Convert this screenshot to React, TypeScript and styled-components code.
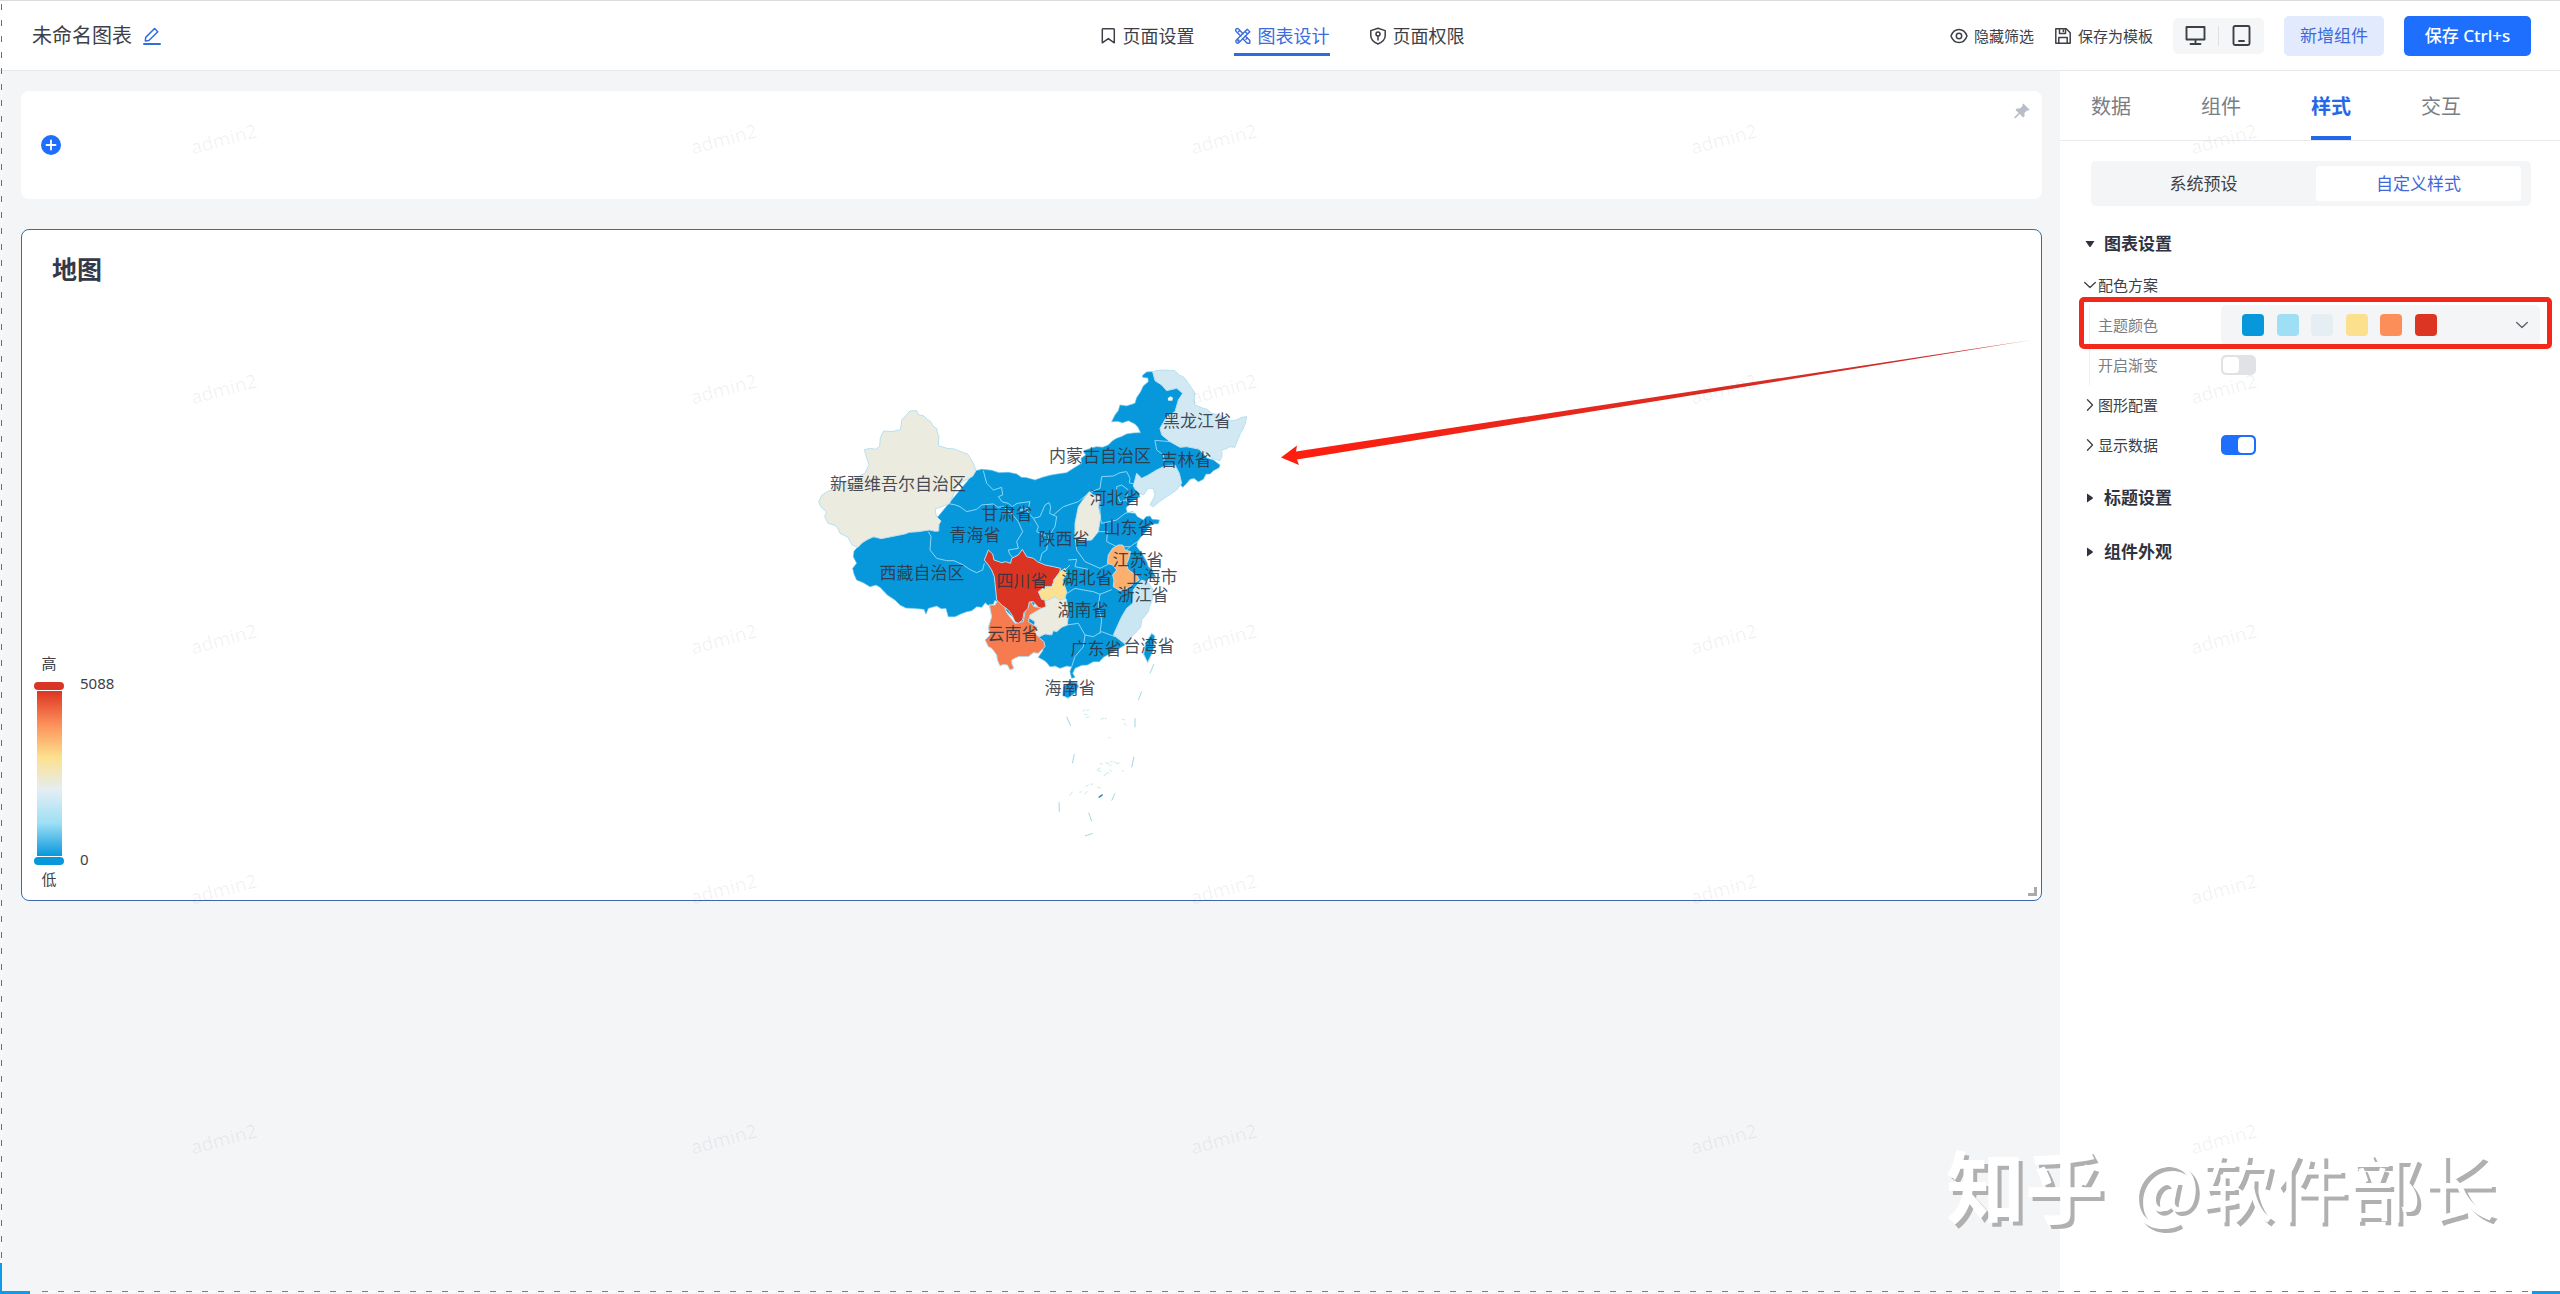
import React, { useId, useState } from "react";
import styled, { createGlobalStyle, css } from "styled-components";

const fontStack = `"Noto Sans", "Noto Sans CJK SC", sans-serif`;
const ink = "#3d4047";
const blue = "#1f6fff";

const GlobalStyle = createGlobalStyle`
  *, *::before, *::after { box-sizing: border-box; }
  body { margin: 0; background: #f3f5f7; color: ${ink}; font-family: ${fontStack}; }
  button { font-family: inherit; cursor: pointer; }
  h1, h2, h3, p { margin: 0; }
`;

const plainButton = css`
  display: inline-flex;
  align-items: center;
  padding: 0;
  border: 0;
  background: none;
  color: inherit;
`;

const Page = styled.div`
  display: flex;
  flex-direction: column;
  min-height: 100vh;
  position: relative;
  overflow: hidden;
`;

/* ---------- top bar ---------- */

const TopBar = styled.header`
  display: grid;
  grid-template-columns: 1fr auto 1fr;
  align-items: center;
  height: 71px;
  padding: 0 29px 0 32px;
  background: #fff;
  border-top: 1px solid #dcdcdc;
  border-bottom: 1px solid #e6e8eb;
`;

const TitleGroup = styled.div`
  display: flex;
  align-items: center;
  gap: 11px;
`;

const PageTitle = styled.h1`
  font-size: 20px;
  font-weight: 400;
  line-height: 30px;
`;

const IconButton = styled.button<{ $color?: string }>`
  ${plainButton}
  color: ${(p) => p.$color ?? "inherit"};
`;

const Nav = styled.nav`
  display: flex;
  gap: 39px;
`;

const NavLink = styled.a<{ $active?: boolean }>`
  display: flex;
  align-items: center;
  gap: 6px;
  height: 41px;
  padding-top: 3px;
  border-bottom: 3px solid ${(p) => (p.$active ? "#2b6be4" : "transparent")};
  color: ${(p) => (p.$active ? "#3b6ce0" : ink)};
  font-size: 18px;
  line-height: 24px;
  text-decoration: none;
`;

const Actions = styled.div`
  display: flex;
  align-items: center;
  justify-content: flex-end;
  gap: 20px;
`;

const TextAction = styled.button`
  ${plainButton}
  gap: 6px;
  font-size: 15px;
  line-height: 20px;
`;

const DeviceGroup = styled.div`
  display: flex;
  align-items: center;
  justify-content: space-between;
  width: 91px;
  height: 36px;
  padding: 0 12px;
  border-radius: 5px;
  background: #f5f6f7;
`;

const Separator = styled.span`
  width: 1px;
  height: 20px;
  background: #dcdfe3;
`;

const Button = styled.button<{ $primary?: boolean }>`
  height: 40px;
  padding: 0;
  width: ${(p) => (p.$primary ? 127 : 100)}px;
  border: 0;
  border-radius: 5px;
  background: ${(p) => (p.$primary ? blue : "#e2ebfd")};
  color: ${(p) => (p.$primary ? "#fff" : "#3f68d8")};
  font-size: 17px;
  font-weight: ${(p) => (p.$primary ? 500 : 400)};
  line-height: 24px;
`;

/* ---------- canvas ---------- */

const Body = styled.div`
  display: flex;
  flex: 1;
`;

const Canvas = styled.main`
  display: flex;
  flex: 1;
  flex-direction: column;
  gap: 30px;
  min-width: 0;
  padding: 20px 18px 0 21px;
`;

const FilterCard = styled.section`
  display: flex;
  align-items: center;
  justify-content: space-between;
  height: 108px;
  padding: 12px 12px 12px 20px;
  border-radius: 8px;
  background: #fff;
`;

const PinButton = styled(IconButton)`
  align-self: flex-start;
`;

const ChartCard = styled.section`
  position: relative;
  padding: 23px 0 11px;
  border: 1px solid #3f68ac;
  border-radius: 8px;
  background: #fff;
`;

const ChartTitle = styled.h2`
  padding-left: 30px;
  color: #353947;
  font-size: 25px;
  font-weight: 700;
  line-height: 32px;
`;

const ChartBody = styled.div`
  display: grid;
  grid-template-columns: 1fr auto 1fr;
  align-items: end;
`;

const MapSvg = styled.svg`
  display: block;
  margin: 65px 0 39px;
  font-family: ${fontStack};
`;

const ArrowSvg = styled.svg`
  align-self: start;
  display: block;
  width: 100%;
  margin-top: 51px;
`;

const Legend = styled.div`
  display: grid;
  grid-template-columns: 30px auto;
  grid-template-rows: 20px 196px 20px;
  column-gap: 16px;
  justify-content: start;
  padding-left: 12px;
  font-size: 15px;
  line-height: 20px;
`;

const LegendEnd = styled.span`
  grid-column: 1;
  text-align: center;
`;

const LegendScale = styled.div`
  display: flex;
  flex-direction: column;
  align-items: center;
  gap: 1px;
  padding: 9px 0 4px;
`;

const LegendHandle = styled.span<{ $color: string }>`
  width: 30px;
  height: 8px;
  border-radius: 4px;
  background: ${(p) => p.$color};
`;

const LegendBar = styled.span`
  flex: 1;
  width: 25px;
  background: linear-gradient(to top, #0798dc, #9edff5, #e4eef3, #fde08e, #fc8f59, #dd3524);
`;

const LegendValues = styled.div`
  display: flex;
  flex-direction: column;
  justify-content: space-between;
`;

const ResizeCorner = styled.span`
  position: absolute;
  right: 4px;
  bottom: 4px;
  width: 9px;
  height: 9px;
  border: solid #aaa;
  border-width: 0 3px 3px 0;
`;

/* ---------- settings panel ---------- */

const Panel = styled.aside`
  width: 500px;
  background: #fff;
`;

const Tabs = styled.div`
  display: flex;
  gap: 70px;
  height: 70px;
  padding: 0 31px;
  border-bottom: 1px solid #e8eaed;
`;

const Tab = styled.button<{ $active?: boolean }>`
  height: 69px;
  padding: 6px 0 0;
  border: 0;
  border-bottom: 4px solid ${(p) => (p.$active ? "#2468e8" : "transparent")};
  background: none;
  color: ${(p) => (p.$active ? "#2468e8" : "#797d84")};
  font-size: 20px;
  font-weight: ${(p) => (p.$active ? 700 : 400)};
  line-height: 30px;
`;

const Segmented = styled.div`
  display: grid;
  grid-template-columns: 225fr 205fr;
  margin: 20px 29px 17px 31px;
  padding: 5px 10px 5px 0;
  border-radius: 5px;
  background: #f3f5f7;
`;

const Segment = styled.button<{ $active?: boolean }>`
  height: 35px;
  padding: 1px 0 0;
  border: 0;
  border-radius: 4px;
  background: ${(p) => (p.$active ? "#fff" : "transparent")};
  color: ${(p) => (p.$active ? "#3f68d8" : ink)};
  font-size: 17px;
  line-height: 24px;
`;

const Sections = styled.div`
  display: flex;
  flex-direction: column;
  gap: 12px;
  padding: 0 20px 0 24px;
`;

const SectionHeader = styled.button`
  ${plainButton}
  gap: 8px;
  height: 42px;
  color: #2f3340;
  font-size: 17px;
  font-weight: 700;
  line-height: 24px;
`;

const Row = styled.div`
  display: grid;
  grid-template-columns: 137px 1fr;
  align-items: center;
  height: 40px;
  position: relative;
  font-size: 15px;
  line-height: 20px;
`;

const GroupToggle = styled.button`
  ${plainButton}
  gap: 2px;
  font-size: 15px;
  line-height: 20px;
`;

const Nested = styled.div`
  margin-left: 5px;
  border-left: 1px solid #eceef1;

  & > ${Row} {
    grid-template-columns: 131px 1fr;
  }
`;

const NestedLabel = styled.label`
  padding-left: 8px;
  color: #797d84;
`;

const PaletteButton = styled.button`
  ${plainButton}
  justify-content: space-between;
  height: 40px;
  padding: 0 12px 0 21px;
  border-radius: 5px;
  background: #f3f5f7;
  color: #5a5e66;
`;

const Swatches = styled.span`
  display: flex;
  justify-content: space-between;
  width: 195px;
`;

const Swatch = styled.span<{ $color: string }>`
  width: 22px;
  height: 22px;
  border-radius: 4px;
  background: ${(p) => p.$color};
`;

const Highlight = styled.span`
  position: absolute;
  inset: -8px -12px -4px -11px;
  border: 5px solid #f3281a;
  border-radius: 5px;
  pointer-events: none;
`;

const Switch = styled.input`
  appearance: none;
  display: flex;
  width: 35px;
  height: 20px;
  margin: 0;
  padding: 2px;
  border-radius: 5px;
  background: #e0e2e5;

  &::before {
    content: "";
    width: 16px;
    border-radius: 4px;
    background: #fff;
  }

  &:checked {
    justify-content: flex-end;
    background: ${blue};
  }
`;

/* ---------- overlays ---------- */

const WatermarkLayer = styled.div`
  position: absolute;
  inset: 14px 0 0 -26px;
  display: grid;
  grid-template-columns: repeat(auto-fill, 500px);
  grid-auto-rows: 250px;
  overflow: hidden;
  pointer-events: none;
`;

const WatermarkCell = styled.div`
  display: grid;
  place-items: center;
  width: 500px;
`;

const WatermarkText = styled.span`
  transform: rotate(-15deg);
  color: rgba(0, 0, 0, 0.06);
  font-size: 19px;
  line-height: 24px;
`;

const Signature = styled.p`
  position: absolute;
  right: 64px;
  bottom: 60px;
  display: flex;
  align-items: center;
  gap: 26px;
  color: #fff;
  font-family: "Noto Sans CJK SC", sans-serif;
  font-size: 74px;
  line-height: 100px;
  text-shadow: 4px 4px 0 #b0b0b0;
  pointer-events: none;

  strong {
    font-size: 79px;
    font-weight: 700;
  }
`;

const LeftGuide = styled.span`
  position: absolute;
  top: 4px;
  bottom: 31px;
  left: 1px;
  width: 1px;
  background: repeating-linear-gradient(to bottom, #2687ad 0 6px, #fff 6px 16px);
`;

const BottomGuide = styled.span`
  position: absolute;
  right: 28px;
  bottom: 2px;
  left: 42px;
  height: 1px;
  background: repeating-linear-gradient(to right, #4a90b0 0 6px, #fff 6px 16px);
`;

const Corner = styled.span<{ $side: "left" | "right" }>`
  position: absolute;
  bottom: 0;
  ${(p) => p.$side}: 0;
  width: ${(p) => (p.$side === "left" ? 30 : 28)}px;
  height: 31px;
  border-bottom: 3px solid #109bea;
  border-left: ${(p) => (p.$side === "left" ? "2px solid #109bea" : "0")};
  pointer-events: none;
`;

/* ---------- icons ---------- */

const Icon = ({ size = 18, box = 18, width = 1.5, children }: {
  size?: number; box?: number; width?: number; children: React.ReactNode;
}) => (
  <svg width={size} height={size} viewBox={`0 0 ${box} ${box}`} fill="none" stroke="currentColor"
    strokeWidth={width} strokeLinecap="round" strokeLinejoin="round" aria-hidden="true">
    {children}
  </svg>
);

const EditIcon = () => (
  <Icon><path d="M2.3 14l.4-3.600L11.600 1.500l3.200 3.200L5.900 13.500z" /><path d="M1 17h16" strokeWidth="2" /></Icon>
);
const BookmarkIcon = () => (
  <Icon><path d="M4 1.800h10.500a.8.8 0 0 1 .8.8v13.200l-6-4.200-6 4.200V2.600a.8.8 0 0 1 .7-.8z" /></Icon>
);
const DesignIcon = () => (
  <Icon width={1.4}>
    <path d="M6.800 9L2.200 4.400a1.600 1.600 0 0 1 2.300-2.300L9 6.800M11.200 9l4.600 4.600v2.600h-2.600L8.600 11.500" />
    <path d="M13.200 2.200l2.600 2.600L5 15.600a1.800 1.800 0 0 1-2.600-2.600zM4.500 4.800l1-1M12 12.300l1.200-1.200M11 4.400l2.600 2.600" />
    <circle cx="4.400" cy="13.600" r=".6" />
  </Icon>
);
const ShieldIcon = () => (
  <Icon><path d="M9 1.200l7.200 2.400v5.200c0 3.800-3 6.400-7.200 8.200-4.200-1.800-7.200-4.400-7.200-8.200V3.600z" /><circle cx="9" cy="6.900" r="2" /><path d="M9 9v4" /></Icon>
);
const EyeIcon = () => (
  <Icon><path d="M1 9c1.500-4.200 4.500-6.500 8-6.500s6.500 2.300 8 6.500c-1.500 4.200-4.500 6.500-8 6.500S2.500 13.200 1 9z" /><circle cx="9" cy="9" r="2.700" /></Icon>
);
const SaveIcon = () => (
  <Icon><path d="M1.800 1.800h10.400l4 4v10.400H1.800z" /><path d="M5.500 2v4.500h6V2M9.300 3v1.500M4.800 16v-5.500h8.400V16" /></Icon>
);
const MonitorIcon = () => (
  <Icon size={21} box={21} width={1.9}><path d="M1.500 2h18v12.500h-18zM10.500 14.500v4M5.500 19h10" /></Icon>
);
const TabletIcon = () => (
  <Icon size={21} box={21} width={1.9}><rect x="2.500" y="1" width="16" height="19" rx="1.500" /><path d="M8 16h5" /></Icon>
);
const PlusIcon = () => (
  <svg width="20" height="20" viewBox="0 0 20 20" aria-hidden="true">
    <circle cx="10" cy="10" r="10" fill={blue} />
    <path d="M10 5.500v9M5.500 10h9" stroke="#fff" strokeWidth="1.800" strokeLinecap="round" />
  </svg>
);
const PinIcon = () => (
  <svg width="16" height="16" viewBox="0 0 16 16" fill="#b9bdc6" aria-hidden="true">
    <path d="M9.300.5l6.200 6.200-1.300 1-1.200-.3-2.600 2.700.2 3-1.500 1.300-3.300-3.300-4.300 4.200-1-.4-.1-.8L4.600 10 1.500 6.900l1.400-1.400 3 .1L8.600 3l-.3-1.300z" />
  </svg>
);
const ChevronDown = () => (
  <Icon size={12} box={12} width={1.3}><path d="M.7 3.500L6 8.500l5.300-5" /></Icon>
);
const ChevronRight = () => (
  <Icon size={12} box={12} width={1.3}><path d="M3.500.7L8.500 6l-5 5.300" /></Icon>
);
const Caret = ({ open }: { open?: boolean }) => (
  <svg width="12" height="12" viewBox="0 0 12 12" fill="currentColor" aria-hidden="true">
    <path d={open ? "M1.500 3h9L6.800 8.500q-.8 1-1.600 0z" : "M3 1.500v9l5.500-3.700q1-.8 0-1.600z"} />
  </svg>
);

/* ---------- map data ---------- */

const landPath =
  "M528 362L545 358 575 361 597 368 625 367 650 372 664 382 680 383 705 390 728 382 750 376 772 372 800 368 822 354 845 340 843 325 857 315 850 303 868 296 890 290 908 292 925 285 938 272 950 265 964 260 980 252 1000 249 1022 248 1014 232 1005 222 985 212 968 218 952 214 935 215 945 195 955 182 960 165 980 168 1005 160 1010 143 1022 125 1030 108 1045 95 1044 84 1028 82 1028 76 1040 66 1058 65 1070 95 1140 115 1150 130 1135 165 1130 230 1180 280 1222 325 1240 330 1260 345 1257 353 1240 362 1230 372 1218 372 1210 388 1195 395 1182 385 1170 388 1160 400 1148 412 1135 395 1010 405 1020 440 1006 448 995 455 986 462 978 475 982 488 1005 490 1012 500 1030 510 1038 500 1050 498 1056 508 1078 510 1075 521 1058 522 1045 532 1038 545 1022 562 1012 575 1010 590 1024 608 1040 635 1045 650 1058 662 1062 680 1040 688 1025 725 990 790 960 830 975 885 950 900 935 908 910 922 898 935 880 935 862 945 845 946 825 955 818 970 825 982 815 985 810 965 815 950 800 948 780 955 766 948 750 950 738 935 730 930 715 922 730 900 700 860 585 750 580 762 564 766 556 758 545 772 530 770 515 782 500 785 482 792 465 800 445 800 438 775 424 776 410 768 385 775 378 792 372 778 340 775 318 774 300 765 285 750 262 735 250 722 240 712 228 705 210 710 190 698 170 690 162 672 158 655 170 640 160 620 162 604 172 592 200 568 414 500Z";

const provinces = [
  { name: "新疆", fill: "#ecebe0", d: "M330 183l20-1 5 12 17 4 8 9 12 8 7 13 11 7 2 14 5 10-2 14 1 15 16 4 12 4 16 0 30 12 12 3 10 15 10 19 6 17-10 17-28 15-20 15-8 20-6 15-8 17-14 6-29 10 4 22 14 14-6 10-1 20-10 1-18-4-34 5-26 2-14 5-40 8-30 6-24-6-16 8-18 10-12 14-18-7-12-23-24-12-8-18-10-7-18-5-10-20 6-14-17-15-7-15 9-20 18-12 25-8 28-22 33-10 26-14 12-26-8-24-6-21 18-4 16 3 12-9 2-26 10-20 25 2 25-6 5-30z" },
  { name: "黑龙江", fill: "#d2e8f3", d: "M1058 65L1072 61 1090 60 1125 62 1138 76 1150 80 1158 90 1165 100 1176 116 1185 130 1182 150 1185 165 1210 175 1222 178 1235 190 1258 196 1280 205 1292 212 1310 210 1325 202 1340 200 1336 220 1328 240 1322 248 1315 265 1304 292 1290 290 1280 296 1265 300 1266 318 1260 332 1235 325 1215 308 1200 298 1160 290 1140 292 1110 275 1085 255 1080 235 1100 200 1125 185 1135 150 1148 130 1130 115 1100 122 1085 105 1065 92Z" },
  { name: "辽宁", fill: "#cfe8f4", d: "M1010 370L1025 385 1045 375 1070 360 1095 348 1125 345 1138 370 1145 400 1130 420 1100 440 1078 455 1060 470 1050 465 1058 450 1065 435 1060 415 1045 415 1030 435 1010 425 1000 408Z" },
  { name: "贵州", fill: "#ecebdf", d: "M720 750L742 748 770 738 798 746 806 785 802 825 785 832 770 845 760 842 755 855 735 852 715 862 700 845 705 815 682 800 690 775Z" },
  { name: "云南", fill: "#f67b4e", d: "M595 748L612 765 620 788 645 820 670 815 678 770 690 750 702 770 728 773 690 795 685 815 712 832 705 850 720 865 732 875 735 890 715 910 700 908 685 920 655 920 635 930 636 942 642 955 630 960 622 945 608 944 600 948 592 930 590 915 575 895 565 890 555 870 570 855 565 832 575 800 568 765 585 765Z" },
  { name: "四川", fill: "#dc3423", d: "M565 600L578 612 582 630 605 638 617 635 632 640 635 625 655 615 667 598 680 620 700 625 712 635 735 645 760 650 782 655 775 680 760 690 765 708 745 715 720 732 735 742 735 755 738 770 725 775 715 772 700 755 688 756 684 775 672 788 668 810 655 820 645 815 636 795 625 780 605 765 590 750 588 728 585 700 583 680 575 660 565 645 553 630Z" },
  { name: "重庆", fill: "#fee091", d: "M795 655L800 672 788 690 792 702 800 725 795 745 780 750 765 740 742 752 725 748 715 725 735 710 755 710 765 685 780 665Z" },
  { name: "山西", fill: "#ecebdf", d: "M868 425L880 435 900 440 895 470 902 500 895 545 875 570 845 572 825 560 825 520 835 470 850 448Z" },
  { name: "安徽", fill: "#fdb06e", d: "M938 595L955 585 968 585 975 600 992 605 985 630 980 640 984 658 1000 670 1012 678 1018 690 1000 700 988 712 975 718 960 722 940 710 942 690 938 675 950 660 938 645 922 640 925 615Z" },
  { name: "浙江福建", fill: "#cbe6f3", d: "M1000 720L1012 704 1025 690 1045 698 1060 720 1058 740 1055 755 1048 772 1045 785 1025 810 1022 832 1010 845 995 860 988 875 975 882 960 870 940 855 955 822 965 800 980 775 998 760Z" },
  { name: "海南", fill: "#0798dc", d: "M790 1010l20-15 20 2 6 12-12 22-20 14-16-8z" },
  { name: "台湾", fill: "#0798dc", d: "M1055 850l10 8-4 42-18 38-12-25 5-33z" },
];

const borders = [
  "M550 362l10 38 20 20 25-8 3 23-13 5 12 16 18 4 12 10 14-10 39-5-5 20-25 5",
  "M450 462l14 2 16 6 20 15 30-7 15-13 35-3 14 10 16-2 25 20 20 25 13 30-18 30 5 20-30 5 4 12 11 13",
  "M385 545l8 14-3 41 20 25 30 7 22 0 28 13 20 14 20 9 18-8 5-20",
  "M660 480l20 2 20 23 20-5 15-35 12-7 5 12-3 20 21 10-5 30-20 30-5 40-14 10-6 23",
  "M700 505l15 25-5 15 35 15M760 495l30-25 45-15 30-25 35-15 5-35 35-2 20-10 20-3 10 20-2 14 32 6",
  "M950 430l0-20 15-5 20 15-7 30-18 5z M978 450l10 14 14 0",
  "M900 440l0 60 5 20 45-10 25-20 25-6",
  "M895 545l27 0-2 30 30 15 40 0 22-15",
  "M825 560l5 40 25 35 45 20 30-15M805 630l25-2-5 22 40 8",
  "M795 660l15-15M798 732l27-17 25 5 30 5 20 8 35-14",
  "M900 733l-5 37 10 40-5 40M800 825l35-5 20 35 25 5 25-15 40 15M855 855l-5 35-25 30-10 30",
  "M1110 275l-45-4 5 29 20 15 4 34-15 8 30-5",
  "M640 625l-4 12M990 590l-15 15",
];

const sea = [
  "M1062 942l-12 28M1025 1025l-10 25M1005 1105l0 27M800 1100l12 28M823 1212l-6 28M1002 1220l-7 32M777 1357l1 28M945 1330l-10 22M855 1458l23-8M866 1388l9 26",
  "M848 1084l8-6m4 4l8-2m-16 12l10 2m-4 8l10-2M902 1108l10-3M914 1106l6-1M966 1108l10 2m-4 10l8 6M925 1164l6-2M900 1240l8 3m8-6l10 4m-30 20l8 4m14 6l10-4m-36-10l4 8m30-22l8 5m8-12l10 4m-96 70l10-6m6 0l8-3m12 10l10 4m-94 22l10-12m20 2l8-2m8 8l8-10M895 1256l6-2m10 22l8-2m10-14l6 4m-4-30l8 2m12 6l8-4m6 26l6-2",
];

const labels: [string, number, number][] = [
  ["新疆维吾尔自治区", 898, 484], ["甘肃省", 1007, 514], ["青海省", 975, 535], ["西藏自治区", 922, 573],
  ["四川省", 1022, 581], ["内蒙古自治区", 1100, 456], ["黑龙江省", 1197, 421], ["吉林省", 1186, 460],
  ["河北省", 1115, 498], ["陕西省", 1064, 539], ["山东省", 1129, 528], ["江苏省", 1138, 560],
  ["湖北省", 1087, 578], ["上海市", 1152, 577], ["浙江省", 1143, 595], ["湖南省", 1083, 610],
  ["云南省", 1013, 634], ["广东省", 1096, 649], ["台湾省", 1149, 646], ["海南省", 1070, 688],
];

const ChinaMap = () => (
  <MapSvg width="460" height="500" viewBox="802 350 460 500" role="img" aria-label="地图">
    <g transform="translate(800 350) scale(.33333)" strokeLinejoin="round">
      <path d={landPath} fill="#0798dc" stroke="#5fc0ea" strokeWidth="2" />
      {borders.map((d) => <path key={d} d={d} fill="none" stroke="#8bd6f3" strokeWidth="3" />)}
      {provinces.map((p) => <path key={p.name} d={p.d} fill={p.fill} stroke="#b5e0f0" strokeWidth="3" />)}
      <path d="M1103 145l8-6 8 4-2 9-12 0z" fill="#e6f5fb" />
      <path d={sea[0]} fill="none" stroke="#a3d6e2" strokeWidth="3" />
      <path d={sea[1]} fill="none" stroke="#c6e9ee" strokeWidth="3" />
      <path d="M896 1342l12-8" stroke="#2b87b3" strokeWidth="4" />
    </g>
    <g fill="#30343f" fillOpacity=".88" fontSize="17" textAnchor="middle">
      {labels.map(([text, x, y]) => <text key={text} x={x} y={y + 6}>{text}</text>)}
    </g>
  </MapSvg>
);

const palette = ["#0798dc", "#9edff5", "#e4eef3", "#fde08e", "#fc8f59", "#dd3524"];
const tabs = ["数据", "组件", "样式", "交互"];
const segments = ["系统预设", "自定义样式"];

export default function App() {
  const paletteId = useId();
  const gradientId = useId();
  const [tab, setTab] = useState("样式");
  const [segment, setSegment] = useState("自定义样式");
  const [gradient, setGradient] = useState(false);
  const [showData, setShowData] = useState(true);

  return (
    <Page>
      <GlobalStyle />
      <TopBar>
        <TitleGroup>
          <PageTitle>未命名图表</PageTitle>
          <IconButton $color="#2f6fe0" aria-label="重命名"><EditIcon /></IconButton>
        </TitleGroup>
        <Nav>
          <NavLink href="#page"><BookmarkIcon />页面设置</NavLink>
          <NavLink href="#design" $active><DesignIcon />图表设计</NavLink>
          <NavLink href="#access"><ShieldIcon />页面权限</NavLink>
        </Nav>
        <Actions>
          <TextAction><EyeIcon />隐藏筛选</TextAction>
          <TextAction><SaveIcon />保存为模板</TextAction>
          <DeviceGroup>
            <IconButton aria-label="桌面端"><MonitorIcon /></IconButton>
            <Separator />
            <IconButton aria-label="移动端"><TabletIcon /></IconButton>
          </DeviceGroup>
          <Button>新增组件</Button>
          <Button $primary>保存 Ctrl+s</Button>
        </Actions>
      </TopBar>

      <Body>
        <Canvas>
          <FilterCard>
            <IconButton aria-label="添加筛选"><PlusIcon /></IconButton>
            <PinButton aria-label="固定"><PinIcon /></PinButton>
          </FilterCard>
          <ChartCard>
            <ChartTitle>地图</ChartTitle>
            <ChartBody>
              <Legend>
                <LegendEnd>高</LegendEnd>
                <span />
                <LegendScale>
                  <LegendHandle $color="#d93526" />
                  <LegendBar />
                  <LegendHandle $color="#0798dc" />
                </LegendScale>
                <LegendValues><span>5088</span><span>0</span></LegendValues>
                <LegendEnd>低</LegendEnd>
              </Legend>
              <ChinaMap />
              <ArrowSvg viewBox="1262 336 780 134" aria-hidden="true">
                <defs>
                  <linearGradient id="arrow" x1="0" x2="1">
                    <stop offset="0" stopColor="#ff1e0e" />
                    <stop offset=".5" stopColor="#e02a20" />
                    <stop offset="1" stopColor="#c4302c" />
                  </linearGradient>
                </defs>
                <path d="M1281 457.500L1297 445.500L1296 451.500L2032 340L1297 459.500L1299 465z" fill="url(#arrow)" />
              </ArrowSvg>
            </ChartBody>
            <ResizeCorner />
          </ChartCard>
        </Canvas>

        <Panel>
          <Tabs role="tablist">
            {tabs.map((name) => (
              <Tab key={name} role="tab" aria-selected={tab === name} $active={tab === name} onClick={() => setTab(name)}>{name}</Tab>
            ))}
          </Tabs>
          <Segmented>
            {segments.map((name) => (
              <Segment key={name} $active={segment === name} onClick={() => setSegment(name)}>{name}</Segment>
            ))}
          </Segmented>
          <Sections>
            <section>
              <SectionHeader aria-expanded="true"><Caret open />图表设置</SectionHeader>
              <Row><GroupToggle aria-expanded="true"><ChevronDown />配色方案</GroupToggle></Row>
              <Nested>
                <Row>
                  <NestedLabel htmlFor={paletteId}>主题颜色</NestedLabel>
                  <PaletteButton id={paletteId} aria-haspopup="listbox">
                    <Swatches>{palette.map((c) => <Swatch key={c} $color={c} />)}</Swatches>
                    <ChevronDown />
                  </PaletteButton>
                  <Highlight />
                </Row>
                <Row>
                  <NestedLabel htmlFor={gradientId}>开启渐变</NestedLabel>
                  <Switch id={gradientId} type="checkbox" role="switch" checked={gradient} onChange={(e) => setGradient(e.target.checked)} />
                </Row>
              </Nested>
              <Row><GroupToggle aria-expanded="false"><ChevronRight />图形配置</GroupToggle></Row>
              <Row>
                <GroupToggle aria-expanded="false"><ChevronRight />显示数据</GroupToggle>
                <Switch type="checkbox" role="switch" aria-label="显示数据" checked={showData} onChange={(e) => setShowData(e.target.checked)} />
              </Row>
            </section>
            <SectionHeader aria-expanded="false"><Caret />标题设置</SectionHeader>
            <SectionHeader aria-expanded="false"><Caret />组件外观</SectionHeader>
          </Sections>
        </Panel>
      </Body>

      <WatermarkLayer aria-hidden="true">
        {Array.from({ length: 25 }, (_, i) => (
          <WatermarkCell key={i}><WatermarkText>admin2</WatermarkText></WatermarkCell>
        ))}
      </WatermarkLayer>
      <Signature><strong>知乎</strong><span>@软件部长</span></Signature>
      <LeftGuide />
      <BottomGuide />
      <Corner $side="left" />
      <Corner $side="right" />
    </Page>
  );
}
